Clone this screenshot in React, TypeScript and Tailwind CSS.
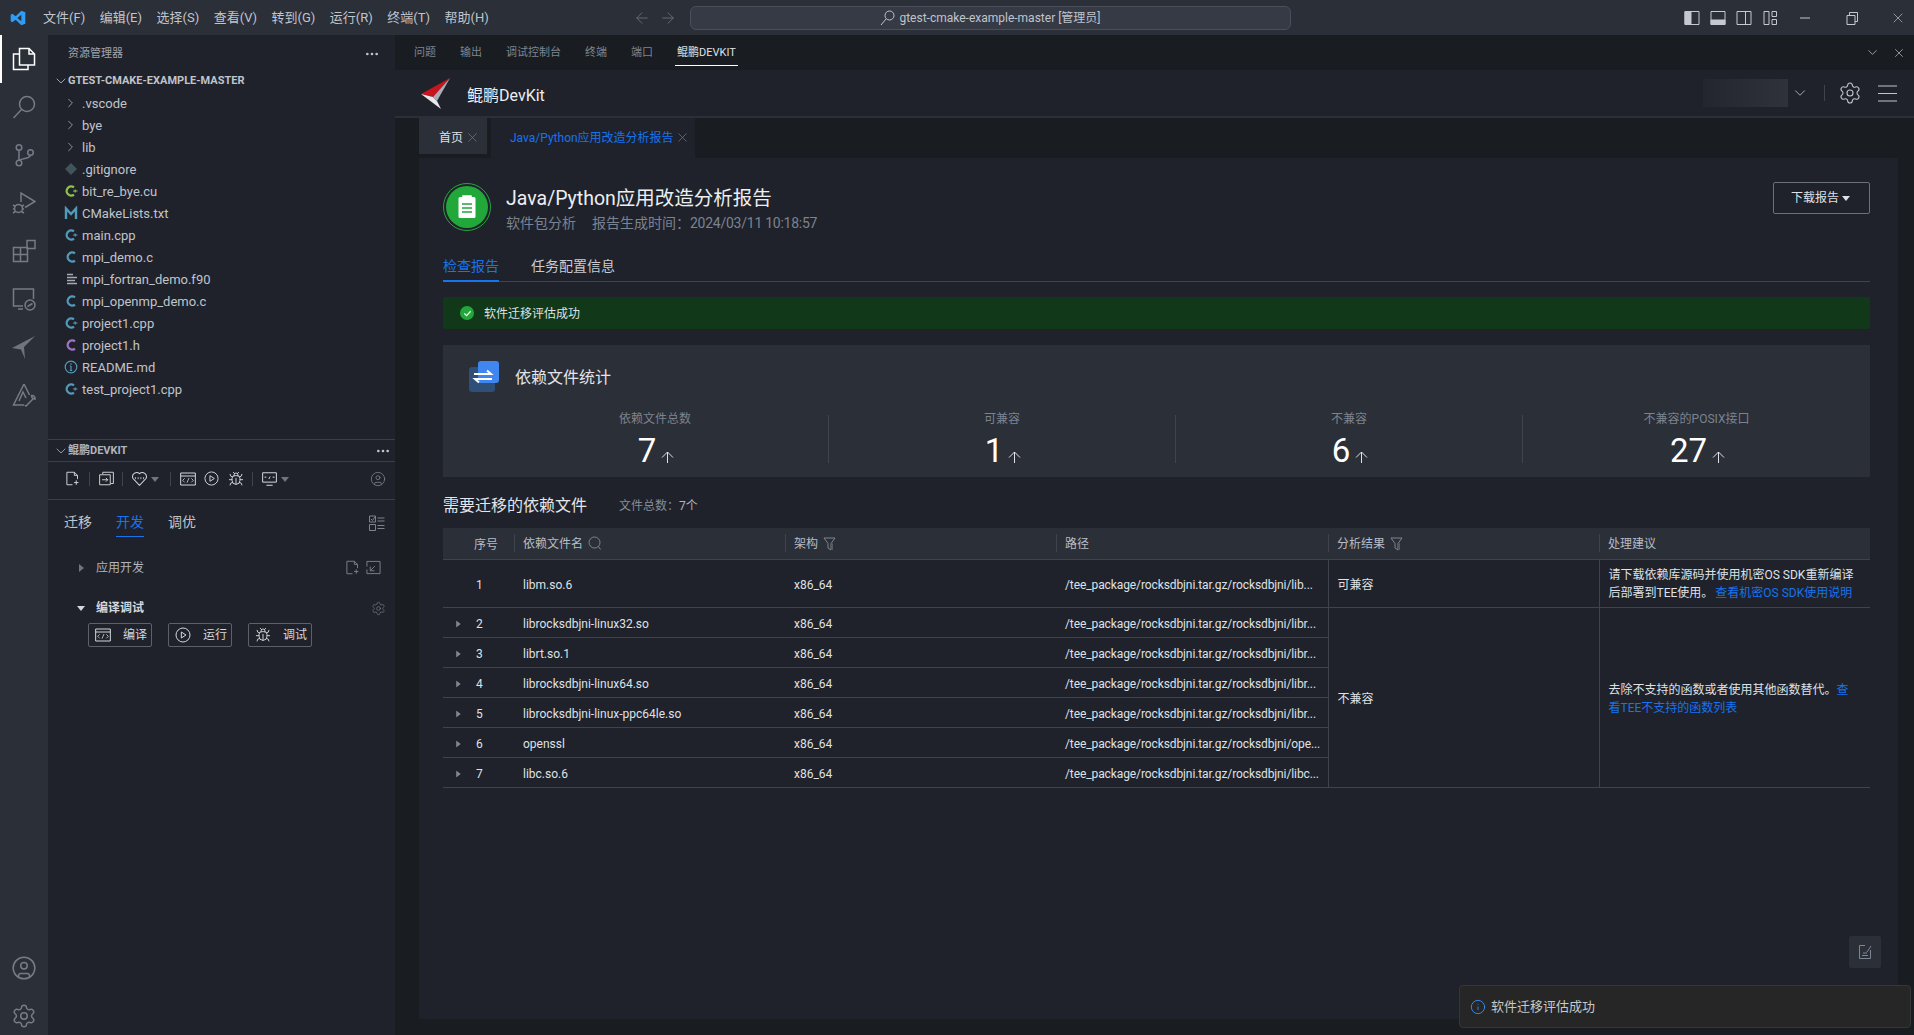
import { ArrowLeft, ArrowRight, Bug, ChevronDown, ChevronRight, CircleUser, Info, MoreHorizontal, Settings, X } from "lucide-react";

const menus = ["文件(F)", "编辑(E)", "选择(S)", "查看(V)", "转到(G)", "运行(R)", "终端(T)", "帮助(H)"];
const panelTabs = ["问题", "输出", "调试控制台", "终端", "端口"];

const tree = [
  { name: ".vscode", kind: "dir" },
  { name: "bye", kind: "dir" },
  { name: "lib", kind: "dir" },
  { name: ".gitignore", kind: "git" },
  { name: "bit_re_bye.cu", kind: "cu" },
  { name: "CMakeLists.txt", kind: "cmake" },
  { name: "main.cpp", kind: "cpp" },
  { name: "mpi_demo.c", kind: "c" },
  { name: "mpi_fortran_demo.f90", kind: "lines" },
  { name: "mpi_openmp_demo.c", kind: "c" },
  { name: "project1.cpp", kind: "cpp" },
  { name: "project1.h", kind: "h" },
  { name: "README.md", kind: "info" },
  { name: "test_project1.cpp", kind: "cpp" },
];

const stats = [
  { label: "依赖文件总数", value: "7" },
  { label: "可兼容", value: "1" },
  { label: "不兼容", value: "6" },
  { label: "不兼容的POSIX接口", value: "27" },
];

const rows = [
  { no: 1, name: "libm.so.6", path: "/tee_package/rocksdbjni.tar.gz/rocksdbjni/lib..." },
  { no: 2, name: "librocksdbjni-linux32.so", path: "/tee_package/rocksdbjni.tar.gz/rocksdbjni/libr..." },
  { no: 3, name: "librt.so.1", path: "/tee_package/rocksdbjni.tar.gz/rocksdbjni/libr..." },
  { no: 4, name: "librocksdbjni-linux64.so", path: "/tee_package/rocksdbjni.tar.gz/rocksdbjni/libr..." },
  { no: 5, name: "librocksdbjni-linux-ppc64le.so", path: "/tee_package/rocksdbjni.tar.gz/rocksdbjni/libr..." },
  { no: 6, name: "openssl", path: "/tee_package/rocksdbjni.tar.gz/rocksdbjni/ope..." },
  { no: 7, name: "libc.so.6", path: "/tee_package/rocksdbjni.tar.gz/rocksdbjni/libc..." },
];

const Tri = ({ down = false, className = "" }: { down?: boolean; className?: string }) => (
  <svg width="8" height="8" viewBox="0 0 8 8" className={className} fill="currentColor">
    {down ? <path d="M0 2h8L4 7z" /> : <path d="M2 0v8l5-4z" />}
  </svg>
);

const Stroke = ({ size = 24, children, className = "" }: { size?: number; children: React.ReactNode; className?: string }) => (
  <svg width={size} height={size} viewBox="0 0 24 24" fill="none" stroke="currentColor" strokeWidth="1.5" className={className}>
    {children}
  </svg>
);

const CodeWindow = ({ size = 16 }: { size?: number }) => (
  <Stroke size={size}>
    <path d="M1 3h22v18H1zM1 7.500h22" />
    <path d="M7 11l-3 3 3 3M17 11l3 3-3 3M13.500 10.500l-3 7" strokeWidth="1.2" />
  </Stroke>
);

const PlayRing = ({ size = 16 }: { size?: number }) => (
  <Stroke size={size}>
    <circle cx="12" cy="12" r="10.500" />
    <path d="M9.500 7.500v9l7-4.500z" />
  </Stroke>
);

const AddFile = ({ size = 16 }: { size?: number }) => (
  <Stroke size={size}>
    <path d="M12 22H3V2h12l5 5v6M15 2v5h5M18 15v7M14.500 18.500h7" />
  </Stroke>
);

const Funnel = () => (
  <svg width="13" height="14" viewBox="0 0 13 14" fill="none" stroke="#7f8590" strokeWidth="1" className="ml-[5px]">
    <path d="M1 1h11L8 6.500V13l-3-2V6.500z" />
    <path d="M8 7v6h2V6" fill="#555a64" stroke="none" />
  </svg>
);

function FileIcon({ kind }: { kind: string }) {
  if (kind === "dir") return <ChevronRight size={18} strokeWidth={1.1} className="text-[#c0c4cc]" />;
  if (kind === "git")
    return (
      <svg width="14" height="14" viewBox="0 0 14 14">
        <path d="M7 1l6 6-6 6-6-6z" fill="#41535b" />
      </svg>
    );
  if (kind === "cmake")
    return (
      <svg width="14" height="14" viewBox="0 0 14 14" fill="none" stroke="#519aba" strokeWidth="2.4">
        <path d="M2 13V2.500l5 5.500 5-5.500V13" />
      </svg>
    );
  if (kind === "lines")
    return (
      <svg width="14" height="14" viewBox="0 0 14 14" stroke="#a6aab2" strokeWidth="1.3">
        <path d="M3 2.500h6M3 5.500h10M3 8.500h8M3 11.500h10" />
      </svg>
    );
  if (kind === "info")
    return (
      <svg width="14" height="14" viewBox="0 0 14 14" fill="none" stroke="#519aba" strokeWidth="1.2">
        <circle cx="7" cy="7" r="5.800" />
        <path d="M7 6v4.500M5.800 6H7M5.800 10.500h2.400M7 3.300v1.400" />
      </svg>
    );
  const color = kind === "cu" ? "#8dc149" : kind === "h" ? "#a074c4" : "#519aba";
  const plus = kind === "cpp" || kind === "cu";
  return (
    <svg width="14" height="14" viewBox="0 0 14 14" fill="none" stroke={color} strokeWidth="2.300">
      <path d={plus ? "M10 3.300A4.600 4.600 0 1 0 10 10.700" : "M11 3.300A4.600 4.600 0 1 0 11 10.700"} />
      {plus && <path d="M9 7h4.500M11.200 5.500v3" strokeWidth="1.200" />}
    </svg>
  );
}

function ActivityBar() {
  const cell = "h-12 flex items-center justify-center text-[#767b85]";
  return (
    <aside className="w-12 shrink-0 bg-[#2b2f38] flex flex-col">
      <div className={`${cell} text-white border-l-2 border-white pr-[2px]`}>
        <Stroke>
          <path d="M7 7H1.500v15.500H16V18" />
          <path d="M7.500 1.500H17l5.500 5.500V18H7.500zM17 1.500V7h5.500" />
        </Stroke>
      </div>
      <div className={cell}>
        <Stroke>
          <circle cx="15" cy="9" r="7.500" />
          <path d="M9.500 14.500L1.500 23" />
        </Stroke>
      </div>
      <div className={cell}>
        <Stroke>
          <circle cx="7" cy="4.500" r="2.800" />
          <circle cx="7" cy="20" r="2.800" />
          <circle cx="18.500" cy="9.500" r="2.800" />
          <path d="M7 7.300v9.900M18.500 12.300c0 3.700-8.500 2.500-11 5" />
        </Stroke>
      </div>
      <div className={cell}>
        <Stroke>
          <path d="M9 11V2l14 8.500-10 6" />
          <circle cx="6.500" cy="17.500" r="4" />
          <path d="M1 14l2.500 1.500M12 14l-2.500 1.500M1 18h2M12 18h-2M1 22l2.500-1.500M12 22l-2.500-1.500" />
        </Stroke>
      </div>
      <div className={cell}>
        <Stroke>
          <path d="M1.500 8.500h7v7h-7zM8.500 15.500h7v7h-7zM1.500 15.500h7v7h-7zM8.500 8.500h7v7" />
          <path d="M15 1.500h8v8h-8z" />
        </Stroke>
      </div>
      <div className={cell}>
        <Stroke>
          <path d="M11 19H1.500V2h20v10M6 22h5" />
          <circle cx="18" cy="18" r="5" />
          <path d="M15.500 19.500l5-3" />
        </Stroke>
      </div>
      <div className={cell}>
        <svg width="24" height="24" viewBox="0 0 24 24" fill="#6f747e">
          <path d="M23 1L0 13l9 1.500L13 24l-1-12z" />
        </svg>
      </div>
      <div className={cell}>
        <Stroke>
          <path d="M12 1L1.500 22H12M12 1l5.500 11" />
          <path d="M7 18l4-9 3 6" />
          <path d="M14 23l8-8m-2.500-2.500a3 3 0 0 1 3.500 3.500l-2-.5-1-1zM13 22a1.500 1.500 0 0 0 2 1" />
        </Stroke>
      </div>
      <div className="flex-1" />
      <div className={cell}>
        <CircleUser size={26} strokeWidth={1.4} />
      </div>
      <div className={`${cell} h-[43px] pt-[5px]`}>
        <Settings size={26} strokeWidth={1.4} />
      </div>
    </aside>
  );
}

function Sidebar() {
  return (
    <aside className="w-[347px] shrink-0 bg-[#1f222b] flex flex-col text-[#c0c4cc]">
      <div className="h-[404px] shrink-0">
        <div className="h-[35px] flex items-center justify-between pl-[20px] pr-[15px] pt-[3px] text-[11px] text-[#a0a4ad]">
          <span>资源管理器</span>
          <MoreHorizontal size={16} className="text-[#c0c4cc]" />
        </div>
        <div className="h-[22px] flex items-center pl-[5px] text-[11px] font-bold text-[#c0c4cc]">
          <ChevronDown size={16} strokeWidth={1.2} />
          <span className="ml-[-1px] pt-[1px]">GTEST-CMAKE-EXAMPLE-MASTER</span>
        </div>
        {tree.map((f) => (
          <div key={f.name} className="h-[22px] flex items-center pl-[15px] text-[13px]">
            <span className="w-[15px] flex justify-center">
              <FileIcon kind={f.kind} />
            </span>
            <span className="ml-[4px] pt-[2px]">{f.name}</span>
          </div>
        ))}
      </div>

      <div className="h-[23px] shrink-0 flex items-center justify-between border-t border-b border-[#3a3e47] pl-[5px] pr-[4px] text-[11px] font-bold text-[#b0b4bc]">
        <span className="flex items-center">
          <ChevronDown size={16} strokeWidth={1.2} />
          <span className="ml-[-1px] pt-[2px]">鲲鹏DEVKIT</span>
        </span>
        <MoreHorizontal size={16} className="text-[#c0c4cc]" />
      </div>

      <div className="h-[38px] shrink-0 flex items-center border-b border-[#3a3e47] pl-[17px] pr-[8px] pb-[4px] text-[#d5d7dc]">
        <AddFile size={15} />
        <span className="ml-[9px] w-px h-[14px] bg-[#3f434c]" />
        <svg width="15" height="15" viewBox="0 0 24 24" fill="none" stroke="currentColor" strokeWidth="1.500" className="ml-[9px]">
          <path d="M6 5V2h17v18h-4M1 6h17v16H1zM5 14h9M11 11l3 3-3 3" />
        </svg>
        <span className="ml-[8px] w-px h-[14px] bg-[#3f434c]" />
        <svg width="17" height="15" viewBox="0 0 24 22" fill="none" stroke="currentColor" strokeWidth="1.500" className="ml-[8px]">
          <path d="M12 21L2.500 11A6 6 0 0 1 12 4a6 6 0 0 1 9.500 7z" />
          <path d="M6 9v3M10 9v3M14 9v3M18 9v3" strokeWidth="1.200" />
        </svg>
        <Tri down className="ml-[3px] text-[#6f747e]" />
        <span className="ml-[11px] w-px h-[14px] bg-[#3f434c]" />
        <span className="ml-[9px] flex">
          <CodeWindow />
        </span>
        <span className="ml-[8px] flex">
          <PlayRing size={15} />
        </span>
        <Bug size={16} strokeWidth={1.400} className="ml-[9px]" />
        <span className="ml-[8px] w-px h-[14px] bg-[#3f434c]" />
        <svg width="15" height="14" viewBox="0 0 24 22" fill="none" stroke="currentColor" strokeWidth="1.600" className="ml-[9px]">
          <path d="M1 1h22v15H1zM7 21h10M4 8h3M17 8h3M11 11l2-4" />
        </svg>
        <Tri down className="ml-[4px] text-[#6f747e]" />
        <CircleUser size={16} strokeWidth={1.200} className="ml-auto mr-[1px] text-[#7d828c]" />
      </div>

      <div className="h-[37px] shrink-0 flex items-center pl-[16px] pr-[10px] pt-[8px] text-[14px]">
        <span>迁移</span>
        <span className="ml-[24px] text-[#1773ee] h-[28px] flex items-center border-b border-[#1773ee]">开发</span>
        <span className="ml-[24px]">调优</span>
        <svg width="16" height="16" viewBox="0 0 16 16" fill="none" stroke="#7d828c" strokeWidth="1" className="ml-auto">
          <path d="M.5 1h6v6h-6zM.5 9.500h6v6h-6zM8.500 3h7M8.500 6h7M8.500 10.500h7M8.500 13.500h7M2 4l1.500 1.500L6 2" />
        </svg>
      </div>

      <div className="h-[31px] mt-[15px] shrink-0 flex items-center pl-[29px] pr-[14px] text-[12px] text-[#b0b4bc]">
        <Tri className="text-[#6f747e]" />
        <span className="ml-[11px]">应用开发</span>
        <span className="ml-auto flex items-center gap-[6px] text-[#7d828c]">
          <AddFile size={15} />
          <svg width="15" height="15" viewBox="0 0 16 16" fill="none" stroke="currentColor" strokeWidth="1">
            <path d="M1 7V1.500h14v13H1V10M4.500 11.500l5-5M4.500 7v4.500H9" />
          </svg>
        </span>
      </div>
      <div className="h-[24px] mt-[13px] shrink-0 flex items-center pl-[29px] pr-[9px] text-[12px] font-bold text-[#d5d7dc]">
        <Tri down className="text-[#d5d7dc]" />
        <span className="ml-[11px]">编译调试</span>
        <Settings size={15} strokeWidth={1.200} className="ml-auto text-[#6f747e]" />
      </div>
      <div className="flex gap-[16px] pl-[40px] mt-[3px] text-[12px] text-[#d5d7dc]">
        <button className="w-16 h-6 border border-[#5b6069] rounded-[2px] flex items-center pl-[6px]">
          <CodeWindow />
          <span className="ml-[12px]">编译</span>
        </button>
        <button className="w-16 h-6 border border-[#5b6069] rounded-[2px] flex items-center pl-[6px]">
          <PlayRing />
          <span className="ml-[12px]">运行</span>
        </button>
        <button className="w-16 h-6 border border-[#5b6069] rounded-[2px] flex items-center pl-[6px]">
          <Bug size={16} strokeWidth={1.400} />
          <span className="ml-[12px]">调试</span>
        </button>
      </div>
    </aside>
  );
}

function TitleBar() {
  return (
    <header className="h-[35px] shrink-0 bg-[#2b2f38] flex items-center text-[#c0c4cc]">
      <div className="w-[635px] shrink-0 flex items-center pl-[10px]">
        <svg width="16" height="16" viewBox="0 0 24 24" fill="#2f9df4" fillRule="evenodd">
          <path d="M17 1L8.500 9.500 3.500 5.500 1 7v10l2.500 1.500 5-4L17 23l6-2.500v-17zM17 7v10l-6-5z" />
        </svg>
        <nav className="ml-[17px] mt-[1px] flex gap-[14.5px] text-[13px] whitespace-nowrap">
          {menus.map((m) => (
            <span key={m}>{m}</span>
          ))}
        </nav>
      </div>
      <ArrowLeft size={18} strokeWidth={1.100} className="-ml-[2px] text-[#6f747e]" />
      <ArrowRight size={18} strokeWidth={1.100} className="ml-[8px] text-[#6f747e]" />
      <div className="ml-[13px] w-[601px] h-6 rounded-[6px] border border-[#4b4f59] bg-[#363a44] flex items-center justify-center text-[12px]">
        <svg width="15" height="16" viewBox="0 0 15 16" fill="none" stroke="currentColor" strokeWidth="1" className="mr-[4px]">
          <circle cx="9.500" cy="5.500" r="4.500" />
          <path d="M6 9l-5 6" />
        </svg>
        <span className="pt-[1px]">gtest-cmake-example-master [管理员]</span>
      </div>
      <div className="ml-auto flex items-center text-[#c5c8d0] pr-[8px]">
        <svg width="16" height="16" viewBox="0 0 16 16" fill="none" stroke="currentColor">
          <path d="M1 1.500h14v13H1z" />
          <path d="M1 1.500h6v13H1z" fill="currentColor" />
        </svg>
        <svg width="16" height="16" viewBox="0 0 16 16" fill="none" stroke="currentColor" className="ml-[10px]">
          <path d="M1 1.500h14v13H1z" />
          <path d="M1 10h14v4.500H1z" fill="currentColor" />
        </svg>
        <svg width="16" height="16" viewBox="0 0 16 16" fill="none" stroke="currentColor" className="ml-[10px]">
          <path d="M1 1.500h14v13H1zM9.500 1.500v13" />
        </svg>
        <svg width="16" height="16" viewBox="0 0 16 16" fill="none" stroke="currentColor" className="ml-[10px]">
          <path d="M2 1.500h5v13H2zM10 1.500h4.500v5H10zM10 9.500h4.500v5H10z" />
        </svg>
        <svg width="12" height="12" viewBox="0 0 12 12" stroke="currentColor" className="ml-[21px]">
          <path d="M1 6h10" />
        </svg>
        <svg width="14" height="14" viewBox="0 0 14 14" fill="none" stroke="currentColor" className="ml-[34px]">
          <path d="M2 4.500h8v9H2zM4.500 4.500v-3h8v9H10" />
        </svg>
        <X size={16} strokeWidth={1} className="ml-[31px]" />
      </div>
    </header>
  );
}

function Report() {
  return (
    <section className="flex-1 ml-[24px] mr-[16px] mb-[16px] bg-[#1f222b] pl-[24px] pr-[28px] pt-[24px] relative">
      <div className="flex items-start justify-between h-[48px]">
        <div className="flex items-center">
          <div className="w-12 h-12 rounded-full border border-[#22a83a] flex items-center justify-center">
            <div className="w-[42px] h-[42px] rounded-full bg-[#22a83a] flex items-center justify-center">
              <svg width="20" height="24" viewBox="0 0 20 24" fill="white" stroke="#22a83a">
                <path d="M1.500 3.500a1.500 1.500 0 0 1 1.500-1.500h14a1.500 1.500 0 0 1 1.500 1.500v18a1.500 1.500 0 0 1-1.500 1.500H3a1.500 1.500 0 0 1-1.500-1.500z" stroke="none" />
                <path d="M6 1h8v3H6z" stroke="white" strokeWidth="1.500" />
                <path d="M5 9h10M5 13h10M5 17h10" strokeWidth="1.600" />
              </svg>
            </div>
          </div>
          <div className="ml-[15px] pt-[5px]">
            <h1 className="text-[19.5px] leading-[24px] text-[#eceef2]">Java/Python应用改造分析报告</h1>
            <p className="text-[14px] leading-[18px] mt-[3px] text-[#7c8390] whitespace-nowrap">
              软件包分析<span className="ml-[16px]">报告生成时间：</span>
              <span className="tracking-[-0.25px]">2024/03/11 10:18:57</span>
            </p>
          </div>
        </div>
        <button className="w-[97px] h-8 border border-[#6a707c] rounded-[2px] flex items-center justify-center pr-[2px] text-[12px] text-[#dfe1e6]">
          下载报告
          <Tri down className="ml-[3px]" />
        </button>
      </div>

      <div className="mt-[17px] h-[35px] flex gap-[32px] border-b border-[#3f434d] text-[14px] text-[#c8cbd2]">
        <span className="text-[#1773ee] border-b-2 border-[#1773ee] h-[35px] pt-[9px]">检查报告</span>
        <span className="h-[35px] pt-[9px]">任务配置信息</span>
      </div>

      <div className="mt-[15px] h-8 rounded-[2px] bg-[#113818] flex items-center pl-[17px] text-[12px] text-[#dfe1e6]">
        <span className="w-[14px] h-[14px] rounded-full bg-[#22a83a] flex items-center justify-center">
          <svg width="9" height="9" viewBox="0 0 10 10" fill="none" stroke="white" strokeWidth="1.300">
            <path d="M1.500 5l2.500 2.500 4.500-5" />
          </svg>
        </span>
        <span className="ml-[10px] pt-[1px]">软件迁移评估成功</span>
      </div>

      <div className="mt-[16px] h-[132px] bg-[#2b2f38]">
        <div className="flex items-center pl-[26px] pt-[16px]">
          <svg width="30" height="31" viewBox="0 0 30 31">
            <rect x="0" y="6" width="26" height="25" rx="3" fill="#2d4f78" />
            <rect x="9" y="0" width="21" height="22" rx="3" fill="#3f86f0" />
            <path d="M5 13h17l-4-3.500M23 18H6l4 3.500" fill="none" stroke="white" strokeWidth="2" />
          </svg>
          <span className="ml-[16px] pt-[2px] text-[16px] text-[#e3e5ea]">依赖文件统计</span>
        </div>
        <div className="mt-[23px] pl-[39px] grid grid-cols-4">
          {stats.map((s, i) => (
            <div key={s.label} className={`h-[48px] flex flex-col items-center ${i < 3 ? "border-r border-[#3f434d]" : ""}`}>
              <span className="text-[12px] leading-[16px] -mt-[4px] text-[#7c8390]">{s.label}</span>
              <div className="flex items-end mt-[6px] pl-[2px]">
                <span className="text-[33px] leading-[36px] text-white">{s.value}</span>
                <svg width="13" height="12" viewBox="0 0 13 12" fill="none" stroke="#dfe1e6" strokeWidth="1" className="ml-[5px] mb-[6px]">
                  <path d="M6.500 12V1M1 6.500L6.500 1 12 6.500" />
                </svg>
              </div>
            </div>
          ))}
        </div>
      </div>

      <div className="mt-[17px] h-[24px] flex items-center">
        <span className="text-[16px] text-[#e3e5ea]">需要迁移的依赖文件</span>
        <span className="ml-[32px] text-[12px] text-[#868d99]">
          文件总数：<span className="text-[#b0b4bc]">7个</span>
        </span>
      </div>

      <table className="mt-[10px] w-full table-fixed border-collapse text-[12px] text-[#dfe1e6]">
        <colgroup>
          <col className="w-[71px]" />
          <col className="w-[271px]" />
          <col className="w-[271px]" />
          <col className="w-[272px]" />
          <col className="w-[271px]" />
          <col />
        </colgroup>
        <thead>
          <tr className="h-[31px] bg-[#2b2f38] border-b border-[#3f434d] text-left text-[#b8bcc5]">
            <th className="font-normal pl-[31px] pt-[3px]">序号</th>
            {["依赖文件名", "架构", "路径", "分析结果", "处理建议"].map((h) => (
              <th key={h} className="font-normal">
                <div className="h-[18px] border-l border-[#3f434d] pl-[8px] pt-[2px] flex items-center">
                  {h}
                  {h === "依赖文件名" && (
                    <svg width="14" height="15" viewBox="0 0 14 15" fill="none" stroke="#7f8590" strokeWidth="1" className="ml-[5px] -mt-[2px]">
                      <circle cx="6.500" cy="6.500" r="5.500" />
                      <path d="M10.500 10.500l2 3" />
                    </svg>
                  )}
                  {(h === "架构" || h === "分析结果") && <Funnel />}
                </div>
              </th>
            ))}
          </tr>
        </thead>
        <tbody>
          {rows.map((r, i) => (
            <tr key={r.no} className={`border-b border-[#3f434d] ${i === 0 ? "h-12" : "h-[30px]"}`}>
              <td className="pl-[11px] pt-[3px]">
                <span className="flex items-center">
                  <span className="w-[8px]">{i > 0 && <Tri className="text-[#7f8694] scale-90" />}</span>
                  <span className="ml-[14px]">{r.no}</span>
                </span>
              </td>
              <td className="pl-[9px] pt-[3px]">{r.name}</td>
              <td className="pl-[9px] pt-[3px]">x86_64</td>
              <td className="pl-[9px] pt-[3px] whitespace-nowrap overflow-hidden tracking-[-0.1px]">{r.path}</td>
              {i === 0 && <td className="pl-[9px] pt-[3px] border-l border-[#3f434d]">可兼容</td>}
              {i === 0 && (
                <td className="pl-[9px] pt-[2px] leading-[18px] border-l border-[#3f434d] whitespace-nowrap">
                  <div>请下载依赖库源码并使用机密OS SDK重新编译</div>
                  <div>
                    后部署到TEE使用。<span className="ml-[2px] text-[#1773ee]">查看机密OS SDK使用说明</span>
                  </div>
                </td>
              )}
              {i === 1 && (
                <td rowSpan={6} className="pl-[9px] pt-[3px] border-l border-[#3f434d]">
                  不兼容
                </td>
              )}
              {i === 1 && (
                <td rowSpan={6} className="pl-[9px] pt-[3px] leading-[18px] border-l border-[#3f434d] whitespace-nowrap">
                  <div>
                    去除不支持的函数或者使用其他函数替代。<span className="text-[#1773ee]">查</span>
                  </div>
                  <div className="text-[#1773ee]">看TEE不支持的函数列表</div>
                </td>
              )}
            </tr>
          ))}
        </tbody>
      </table>

      <button className="absolute right-[17px] bottom-[51px] w-8 h-8 rounded-[2px] bg-[#2b2f38] flex items-center justify-center text-[#7f8694]">
        <svg width="14" height="16" viewBox="0 0 14 16" fill="none" stroke="currentColor" strokeWidth="1">
          <path d="M7 1.500H1.500v13h11V6M9 8l4-6M5 9h4M4 11.500h6" />
        </svg>
      </button>
    </section>
  );
}

export default function App() {
  return (
    <div className="relative w-screen h-screen overflow-hidden flex flex-col bg-[#191c21] [font-family:Roboto,'Noto_Sans_CJK_SC',sans-serif]">
      <TitleBar />
      <div className="flex-1 min-h-0 flex">
        <ActivityBar />
        <Sidebar />
        <main className="flex-1 min-w-0 flex flex-col bg-[#191c21]">
          <div className="h-[35px] shrink-0 flex items-center pl-[19px] pr-[8px] text-[11px] text-[#7f8590]">
            <div className="flex items-center gap-[24px]">
              {panelTabs.map((t) => (
                <span key={t} className="pt-[2px]">
                  {t}
                </span>
              ))}
              <span className="h-[35px] pt-[2px] flex items-center relative text-[#dfe1e6]">
                鲲鹏DEVKIT
                <span className="absolute left-[-2px] right-[-2px] bottom-[4px] h-px bg-white" />
              </span>
            </div>
            <ChevronDown size={15} strokeWidth={1.200} className="ml-auto text-[#c0c4cc]" />
            <X size={14} strokeWidth={1.200} className="ml-[12px] text-[#c0c4cc]" />
          </div>

          <div className="h-[48px] shrink-0 border-b-2 border-[#2b2f38] bg-[#1f222b] flex items-center pl-[25px] pr-[17px]">
            <svg width="30" height="32" viewBox="0 0 30 32">
              <path d="M30 1L1 17l12 3z" fill="#c8141e" />
              <path d="M13 20L1 17l20 15-4-8z" fill="#e8e8ec" />
              <path d="M30 1L13 20l4 4z" fill="#a9adb5" />
            </svg>
            <span className="ml-[17px] mt-[5px] text-[16px] text-[#eceef2]">鲲鹏DevKit</span>
            <div className="ml-auto w-[85px] h-7 bg-gradient-to-r from-[#23262f] to-[#2f323a]" />
            <ChevronDown size={18} strokeWidth={1.100} className="ml-[3px] text-[#c0c4cc]" />
            <span className="ml-[15px] w-px h-[16px] bg-[#3f434d]" />
            <Settings size={24} strokeWidth={1.100} className="ml-[13px] text-[#c0c4cc]" />
            <svg width="19" height="17" viewBox="0 0 19 17" stroke="#c0c4cc" strokeWidth="1.200" className="ml-[16px]">
              <path d="M0 1h19M0 8.500h19M0 16h19" />
            </svg>
          </div>

          <div className="h-[40px] shrink-0 pl-[24px] flex items-start text-[12px]">
            <div className="w-[68px] h-[36px] bg-[#2b2f38] flex items-center pl-[20px] pt-[3px] text-[#dfe1e6]">
              首页
              <X size={15} strokeWidth={1} className="ml-[2px] text-[#7f8590]" />
            </div>
            <div className="ml-[4px] w-[204px] h-[40px] bg-[#1f222b] flex items-center pl-[19px] pb-[1px] text-[#1773ee] whitespace-nowrap">
              Java/Python应用改造分析报告
              <X size={15} strokeWidth={1} className="ml-[1px] text-[#7f8590]" />
            </div>
          </div>

          <Report />
        </main>
      </div>

      <div className="absolute left-[1459px] top-[985px] w-[452px] h-[43px] rounded-[4px] border border-[#363636] bg-[#262626] flex items-center pl-[10px] text-[13px] text-[#c8c8c8]">
        <Info size={16} strokeWidth={1.300} className="text-[#3794ff]" />
        <span className="ml-[5px]">软件迁移评估成功</span>
      </div>
    </div>
  );
}
